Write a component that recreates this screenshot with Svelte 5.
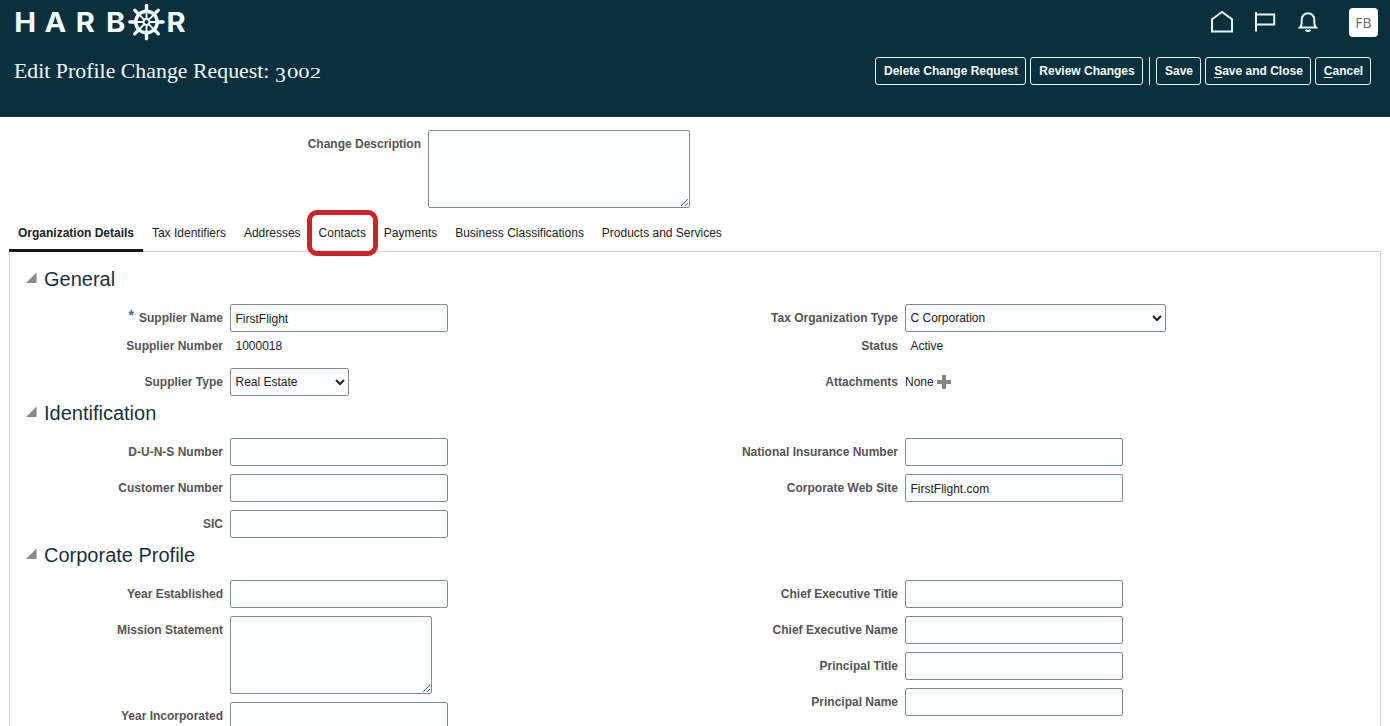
<script>
  const tabs = ['Organization Details', 'Tax Identifiers', 'Addresses', 'Contacts', 'Payments', 'Business Classifications', 'Products and Services'];
  const sections = [
    {
      title: 'General',
      columns: [
        [
          { label: 'Supplier Name', kind: 'input', value: 'FirstFlight', required: true, tight: true },
          { label: 'Supplier Number', kind: 'text', value: '1000018' },
          { label: 'Supplier Type', kind: 'select', value: 'Real Estate', width: 119 }
        ],
        [
          { label: 'Tax Organization Type', kind: 'select', value: 'C Corporation', width: 261, tight: true },
          { label: 'Status', kind: 'text', value: 'Active' },
          { label: 'Attachments', kind: 'attach', value: 'None' }
        ]
      ]
    },
    {
      title: 'Identification',
      columns: [
        [
          { label: 'D-U-N-S Number', kind: 'input', value: '' },
          { label: 'Customer Number', kind: 'input', value: '' },
          { label: 'SIC', kind: 'input', value: '' }
        ],
        [
          { label: 'National Insurance Number', kind: 'input', value: '' },
          { label: 'Corporate Web Site', kind: 'input', value: 'FirstFlight.com' }
        ]
      ]
    },
    {
      title: 'Corporate Profile',
      columns: [
        [
          { label: 'Year Established', kind: 'input', value: '' },
          { label: 'Mission Statement', kind: 'area', value: '' },
          { label: 'Year Incorporated', kind: 'input', value: '' }
        ],
        [
          { label: 'Chief Executive Title', kind: 'input', value: '' },
          { label: 'Chief Executive Name', kind: 'input', value: '' },
          { label: 'Principal Title', kind: 'input', value: '' },
          { label: 'Principal Name', kind: 'input', value: '' }
        ]
      ]
    }
  ];
  const spokes = [0, 45, 90, 135, 180, 225, 270, 315];
</script>

<div class="page">
  <header>
    <div class="brandbar">
      <svg class="logo" width="176" height="44" viewBox="0 0 176 44" fill="#f2fdff">
        <g transform="scale(1.08 1)">
          <text y="32" x="0.3 28.2 57.3 85.3">HARB</text>
          <text y="32" x="141.3">R</text>
        </g>
        <g transform="translate(132.5 22)" stroke="#f2fdff" stroke-linecap="round" fill="none">
          <circle r="10.8" stroke-width="3.4" />
          <circle r="3" stroke-width="1.8" />
          {#each spokes as a}
            <g transform="rotate({a})">
              <path d="M0-3V-12" stroke-width="1.9" />
              <path d="M0-12V-16.7" stroke-width="3.3" />
            </g>
          {/each}
        </g>
      </svg>
      <div class="tools">
        <svg width="24" height="24" viewBox="0 0 24 24"><path d="M2 9.2 12 2l10 7.2v12.3H2Z" /></svg>
        <svg width="24" height="24" viewBox="0 0 24 24"><path d="M3 2v19.5M3 4.5h18.2v10H3" /></svg>
        <svg width="24" height="24" viewBox="0 0 24 24"><path d="M4 17.5c1.2-1.2 1.7-2.5 1.7-4.5V9.5a6.3 6.3 0 0 1 12.6 0V13c0 2 .5 3.3 1.7 4.5Z" /><path d="M9.5 20q2.5 2 5 0" /></svg>
        <span class="avatar">FB</span>
      </div>
    </div>
    <div class="titlebar">
      <h1>Edit Profile Change Request: <span class="three">3</span><span class="low">002</span></h1>
      <div class="actions">
        <button style:width="151px">Delete Change Request</button>
        <button style:width="113px">Review Changes</button>
        <i></i>
        <button style:width="45px">Save</button>
        <button style:width="106px"><u>S</u>ave and Close</button>
        <button style:width="56px"><u>C</u>ancel</button>
      </div>
    </div>
  </header>

  <div class="description">
    <label for="desc">Change Description</label>
    <textarea id="desc" class="wide"></textarea>
  </div>

  <nav>
    {#each tabs as tab, i}
      <div class="tab" class:active={i === 0}>
        {tab}
        {#if tab === 'Contacts'}<span class="highlight"></span>{/if}
      </div>
    {/each}
  </nav>

  <main>
    {#each sections as section}
      <section>
        <h2>
          <svg width="12" height="12" viewBox="0 0 12 12"><path d="M0 11.5 11.5 0v11.5Z" /></svg>
          {section.title}
        </h2>
        <div class="columns">
          {#each section.columns as column}
            <div class="column">
              {#each column as f}
                <div class="row" class:tight={f.tight}>
                  <span class="label">{#if f.required}<b class="star">*</b>{/if}{f.label}</span>
                  {#if f.kind === 'input'}
                    <input type="text" value={f.value} />
                  {:else if f.kind === 'select'}
                    <select style:width="{f.width}px"><option>{f.value}</option></select>
                  {:else if f.kind === 'area'}
                    <textarea></textarea>
                  {:else if f.kind === 'attach'}
                    <span class="attach">{f.value}<svg width="14" height="14" viewBox="0 0 14 14"><path d="M5 0h4v5h5v4H9v5H5V9H0V5h5Z" /></svg></span>
                  {:else}
                    <span class="value">{f.value}</span>
                  {/if}
                </div>
              {/each}
            </div>
          {/each}
        </div>
      </section>
    {/each}
  </main>
</div>

<style>
  :global(body) { margin: 0; background: #fff; overflow: hidden; }
  .page { width: 1390px; height: 726px; overflow: hidden; box-sizing: border-box; font: 12px/28px "Liberation Sans", Arial, sans-serif; color: #222; }
  .page * { box-sizing: border-box; }
  header { height: 117px; background: #0a303e; color: #f2fdff; border-bottom: 1px solid #17303a; }
  .brandbar { height: 44px; padding: 0 12px 0 14px; display: flex; justify-content: space-between; }
  .logo { overflow: visible; }
  .logo text { font: 700 27px Inter, "Open Sans", sans-serif; }
  .tools { display: flex; align-items: center; }
  .tools svg { fill: none; stroke: #e4f7fa; stroke-width: 2; margin-right: 19px; }
  .avatar { width: 29px; height: 29px; margin-left: 10px; border-radius: 4px; background: #fff; color: #696969; font: 14px/29px "Open Sans", sans-serif; text-align: center; }
  .titlebar { display: flex; justify-content: space-between; padding: 13px 19px 0 14px; }
  h1 { margin: 0; font: 400 21.8px/29px "Liberation Serif", serif; letter-spacing: .02px; white-space: pre; }
  .three { display: inline-block; line-height: 1; transform: translateY(4px); margin-right: 1px; }
  .low { display: inline-block; font-size: 15.5px; line-height: 1; transform: scaleX(1.46); transform-origin: 0 100%; }
  .actions { display: flex; gap: 4px; }
  button { height: 28px; padding: 0 0 0 1px; border: 1px solid #e4f7fa; border-radius: 3px; background: transparent; color: #f2fdff; font: 700 12px "Liberation Sans", Arial, sans-serif; white-space: nowrap; }
  .actions i { width: 1px; height: 28px; margin: 0 2px; background: #d5e8ec; }
  u { text-underline-offset: 2px; }
  .description { display: flex; gap: 7px; padding-top: 13px; height: 98px; }
  .description label { width: 421px; text-align: right; font-weight: 700; color: #555; }
  nav { display: flex; height: 36px; margin: 0 9px; padding-bottom: 1px; }
  .tab { position: relative; padding: 3px 8.98px 0; white-space: nowrap; line-height: 30px; color: #222; }
  .tab.active { font-weight: 700; border-bottom: 3px solid #161616; height: 37px; z-index: 1; }
  .highlight { position: absolute; left: -3px; top: -5px; width: 71px; height: 46px; border: 5px solid #cc2229; border-radius: 10px; z-index: 2; }
  main { margin: 0 9px; padding-top: 10px; height: 520px; border: 1px solid #d5d5d5; }
  h2 { display: flex; align-items: center; gap: 7px; margin: 0 0 8px; padding-left: 16px; height: 34px; font: 400 20px/34px "Liberation Sans", Arial, sans-serif; color: #17323d; }
  h2 svg { fill: #8a8a8a; width: 11px; margin-top: -2px; }
  .columns { display: grid; grid-template-columns: 675px 675px; }
  .row { display: flex; gap: 7px; margin-bottom: 8px; }
  .column .row:last-child { margin-bottom: 0; }
  .row.tight { margin-bottom: 0; }
  .label { width: 213px; text-align: right; font-weight: 700; color: #555; white-space: nowrap; }
  .star { color: #2b6e9b; font-size: 14px; font-weight: 700; line-height: 1; position: relative; top: -2px; margin-right: 5px; }
  input, select, textarea { display: block; margin: 0; border: 1px solid #7f8b91; border-radius: 2px; background: #fcfdfe; color: #222; font: 12px "Liberation Sans", Arial, sans-serif; outline: 0; }
  input { width: 218px; height: 28px; padding: 2px 4.5px 0; }
  select { height: 28px; padding: 0 .5px; }
  textarea { width: 202px; height: 78px; }
  textarea.wide { width: 262px; }
  .value { padding-left: 5.5px; }
  .attach { display: flex; align-items: center; gap: 3px; }
  .attach svg { fill: #858585; }
</style>
